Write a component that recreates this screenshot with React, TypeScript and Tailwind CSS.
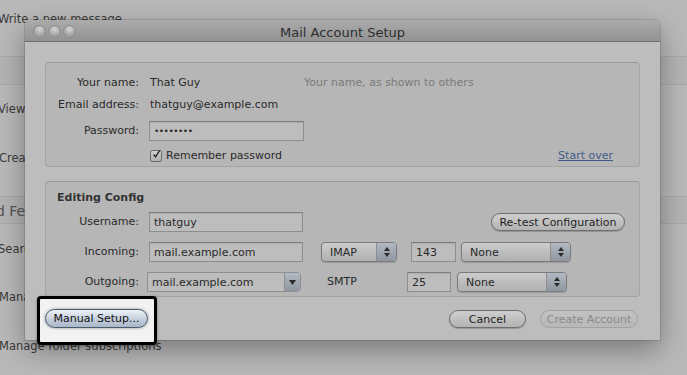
import React from 'react'

function Light() {
  return (
    <div className="w-[13px] h-[13px] rounded-full border border-[#8a8a8a] bg-[radial-gradient(circle_at_50%_30%,#d6d6d6_0%,#a9a9a9_55%,#9a9a9a_100%)]" />
  )
}

function Stepper() {
  return (
    <div className="flex h-full w-[20px] flex-col items-center justify-center gap-[2px] border-l border-[#8d8d8d] bg-gradient-to-b from-[#b3b9c2] to-[#8e96a1]">
      <svg width="6" height="4" viewBox="0 0 6 4">
        <path d="M3 0L6 4H0z" fill="#2c2c2c" />
      </svg>
      <svg width="6" height="4" viewBox="0 0 6 4">
        <path d="M0 0H6L3 4z" fill="#2c2c2c" />
      </svg>
    </div>
  )
}

function Popup({ label, width }: { label: string; width: string }) {
  return (
    <div
      className={`flex h-[20px] ${width} items-stretch overflow-hidden rounded-[4px] border border-[#7a7a7a] bg-gradient-to-b from-[#cdcdcd] via-[#bdbdbd] to-[#b1b1b1] shadow-[0_1px_1px_rgba(0,0,0,0.15)]`}
    >
      <span className="flex flex-1 items-center pl-[8px] pt-[2px]">{label}</span>
      <Stepper />
    </div>
  )
}

function Field({ value, width, dots = false }: { value: string; width: string; dots?: boolean }) {
  return (
    <div
      className={`flex h-[20px] ${width} items-center border border-[#8e8e8e] border-t-[#7c7c7c] bg-[#bdbdbd] pl-[4px] pt-[2px] shadow-[inset_0_1px_1px_rgba(0,0,0,0.08)] ${
        dots ? 'text-[9px] tracking-[-0.5px]' : ''
      }`}
    >
      {value}
    </div>
  )
}

function Pill({ label, className = '', disabled = false }: { label: string; className?: string; disabled?: boolean }) {
  return (
    <div
      className={`flex h-[18px] items-center justify-center rounded-full border bg-gradient-to-b pt-[2px] ${
        disabled
          ? 'border-[#a2a2a2] from-[#c2c2c2] to-[#b8b8b8] text-[#8a8a8a]'
          : 'border-[#6f6f6f] from-[#cfcfcf] to-[#b3b3b3] text-[#242424] shadow-[0_1px_1px_rgba(0,0,0,0.2)]'
      } ${className}`}
    >
      {label}
    </div>
  )
}

export default function App() {
  return (
    <div className="relative h-[375px] w-[687px] overflow-hidden bg-[#b9b9b9] font-['DejaVu_Sans',sans-serif] text-[11px] text-[#2a2a2a]">
      {/* Application behind the sheet */}
      <div className="flex flex-col text-[11.5px] text-[#3a3a3a]">
        <div className="-ml-[2px] flex h-[36px] items-center pt-[3px]">Write a new message</div>
        <div className="h-[20px]" />
        <div className="h-[29px] border-y border-[#a9a9a9] bg-[#b4b4b4]" />
        <div className="-ml-[2px] flex h-[46px] items-center pt-[4px]">View</div>
        <div className="-ml-[1px] flex h-[52px] items-center pt-[4px]">Create</div>
        <div className="h-[13px]" />
        <div className="-ml-[4px] flex h-[28px] items-center border-y border-[#a9a9a9] bg-[#b4b4b4] pt-[3px] text-[14px] text-[#555]">
          d Features
        </div>
        <div className="-ml-[2px] flex h-[48px] items-center pt-[4px]">Search</div>
        <div className="-ml-[1px] flex h-[48px] items-center pt-[4px]">Manage</div>
        <div className="-ml-[1px] flex h-[50px] items-center pt-[4px]">Manage folder subscriptions</div>
      </div>

      {/* Mail Account Setup sheet */}
      <div className="absolute left-[25px] top-[20px] flex h-[320px] w-[635px] flex-col rounded-t-[5px] bg-[#bdbdbd] shadow-[0_10px_28px_rgba(0,0,0,0.35),0_0_0_1px_rgba(0,0,0,0.12)]">
        <div className="relative flex h-[22px] items-center justify-center rounded-t-[5px] border-b border-[#6e6e6e] bg-gradient-to-b from-[#ababab] to-[#939393]">
          <div className="absolute left-[8px] top-[5px] flex gap-[2px]">
            <Light />
            <Light />
            <Light />
          </div>
          <span className="pt-[4px] text-[13px] text-[#2e2e2e]">Mail Account Setup</span>
        </div>

        <div className="flex flex-1 flex-col px-[20px] pt-[20px]">
          {/* Account panel */}
          <div className="flex h-[105px] flex-col rounded-[4px] border border-[#a3a3a3] border-t-[#989898] bg-[#b6b6b6] pt-[9px]">
            <div className="flex h-[22px] items-center">
              <span className="w-[93px] text-right">Your name:</span>
              <span className="ml-[11px] w-[154px]">That Guy</span>
              <span className="text-[#7a7a7a]">Your name, as shown to others</span>
            </div>
            <div className="flex h-[22px] items-center">
              <span className="w-[93px] text-right">Email address:</span>
              <span className="ml-[11px]">thatguy@example.com</span>
            </div>
            <div className="mt-[4px] flex h-[22px] items-center">
              <span className="w-[93px] text-right">Password:</span>
              <div className="ml-[10px]">
                <Field value="••••••••" width="w-[155px]" dots />
              </div>
            </div>
            <div className="mt-[5px] flex h-[18px] items-center">
              <div className="ml-[104px] flex h-[12px] w-[12px] items-center justify-center rounded-[2px] border border-[#6d6d6d] bg-gradient-to-b from-[#d0d0d0] to-[#b0b0b0]">
                <svg width="11" height="11" viewBox="0 0 11 11" className="-mt-[3px] ml-[1px]">
                  <path d="M2 5.5L4.3 8.5L9.5 0.5" stroke="#1e1e1e" strokeWidth="1.6" fill="none" />
                </svg>
              </div>
              <span className="ml-[4px]">Remember password</span>
              <span className="ml-auto mr-[26px] text-[#3f5c88] underline">Start over</span>
            </div>
          </div>

          {/* Editing config panel */}
          <div className="mt-[14px] flex h-[116px] flex-col rounded-[4px] border border-[#a3a3a3] border-t-[#989898] bg-[#b6b6b6] pt-[7px]">
            <div className="flex h-[18px] items-center pl-[11px] font-bold text-[#333]">Editing Config</div>
            <div className="mt-[5px] flex h-[20px] items-center">
              <span className="w-[93px] text-right">Username:</span>
              <div className="ml-[10px]">
                <Field value="thatguy" width="w-[154px]" />
              </div>
              <Pill label="Re-test Configuration" className="ml-auto mr-[14px] w-[134px]" />
            </div>
            <div className="mt-[10px] flex h-[20px] items-center">
              <span className="w-[93px] text-right">Incoming:</span>
              <div className="ml-[10px]">
                <Field value="mail.example.com" width="w-[154px]" />
              </div>
              <div className="ml-[18px]">
                <Popup label="IMAP" width="w-[76px]" />
              </div>
              <div className="ml-[14px]">
                <Field value="143" width="w-[45px]" />
              </div>
              <div className="ml-[5px]">
                <Popup label="None" width="w-[110px]" />
              </div>
            </div>
            <div className="mt-[10px] flex h-[20px] items-center">
              <span className="w-[93px] text-right">Outgoing:</span>
              <div className="ml-[8px] flex h-[20px] w-[154px] items-stretch overflow-hidden rounded-r-[4px] border border-[#8e8e8e] bg-[#bdbdbd]">
                <span className="flex flex-1 items-center pl-[4px] pt-[2px]">mail.example.com</span>
                <div className="flex w-[16px] items-center justify-center border-l border-[#8d8d8d] bg-gradient-to-b from-[#b3b9c2] to-[#8e96a1]">
                  <svg width="7" height="5" viewBox="0 0 7 5">
                    <path d="M0 0H7L3.5 5z" fill="#2c2c2c" />
                  </svg>
                </div>
              </div>
              <span className="ml-[26px] w-[80px]">SMTP</span>
              <div>
                <Field value="25" width="w-[44px]" />
              </div>
              <div className="ml-[6px]">
                <Popup label="None" width="w-[110px]" />
              </div>
            </div>
          </div>

          {/* Footer buttons */}
          <div className="flex items-start">
            <div className="-ml-[8px] mt-[-1px] flex h-[49px] w-[120px] items-start rounded-[4px] border-[3px] border-black bg-[#f2f2f2] pl-[5px] pt-[10px] shadow-[0_1px_3px_rgba(0,0,0,0.4)]">
              <div className="flex h-[19px] w-[103px] items-center justify-center rounded-full border border-[#4d5a6a] bg-gradient-to-b from-[#eef2f7] via-[#c7d1de] to-[#a9b7c9] pt-[2px] text-[#111] shadow-[0_0_3px_rgba(60,80,110,0.6)]">
                Manual Setup...
              </div>
            </div>
            <Pill label="Cancel" className="ml-[292px] mt-[13px] w-[77px]" />
            <Pill label="Create Account" className="ml-[14px] mt-[13px] w-[98px]" disabled />
          </div>
        </div>
      </div>
    </div>
  )
}
